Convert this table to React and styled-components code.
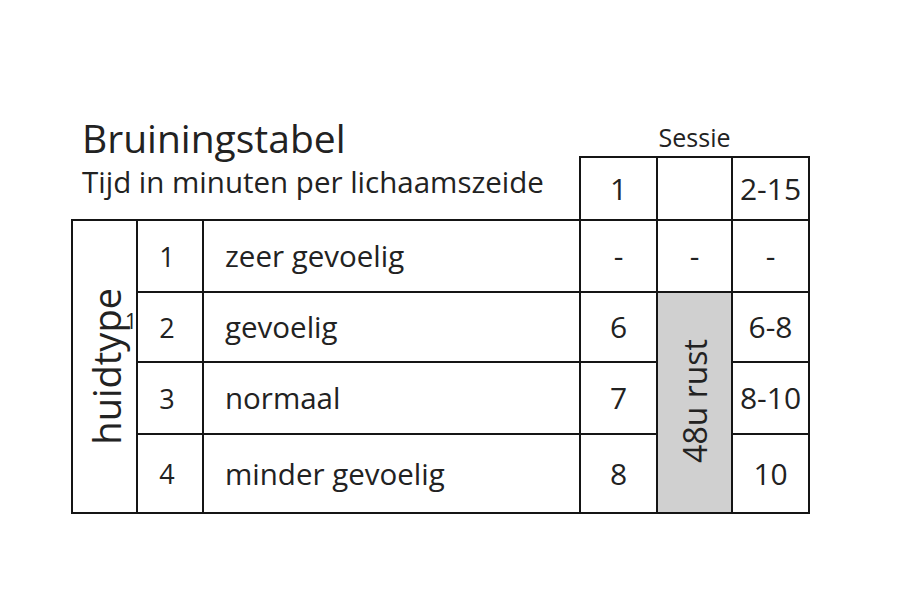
import React from "react";
import styled, { createGlobalStyle } from "styled-components";

const GlobalStyle = createGlobalStyle`
  html, body {
    margin: 0;
    padding: 0;
    background: #ffffff;
  }
  body {
    font-family: "Open Sans", "Noto Sans", sans-serif;
    color: #222222;
  }
`;

const Page = styled.div`
  width: 900px;
  height: 600px;
  padding: 110px 0 0 71px;
  box-sizing: border-box;
`;

const Table = styled.table`
  border-collapse: collapse;
  table-layout: fixed;
  width: 738px;

  td {
    padding: 0;
    border: 2px solid #151515;
  }
`;

const TopRow = styled.tr`
  height: 47px;

  td {
    border: none;
    vertical-align: bottom;
  }
`;

const Title = styled.td`
  font-size: 39px;
  line-height: 39px;
  padding-left: 10px !important;
  white-space: nowrap;
`;

const SessionLabel = styled.td`
  font-size: 25px;
  line-height: 25px;
  text-align: center;
  padding-bottom: 6px !important;
`;

const HeadRow = styled.tr`
  height: 63px;
`;

const Subtitle = styled.td`
  border: none !important;
  font-size: 29.5px;
  line-height: 29.5px;
  vertical-align: top;
  padding: 10px 0 0 10px !important;
  white-space: nowrap;
`;

const Row = styled.tr`
  height: ${(p) => p.$h}px;
`;

const Cell = styled.td`
  font-size: ${(p) => p.$size || 30}px;
  line-height: 1;
  text-align: ${(p) => (p.$left ? "left" : "center")};
  padding-left: ${(p) => (p.$left ? "21px" : "0")} !important;
  padding-right: ${(p) => (p.$narrow ? "6px" : "0")} !important;
  vertical-align: middle;
  white-space: nowrap;
  background: ${(p) => (p.$shade ? "#d0d0d0" : "transparent")};
`;

const SideCell = styled.td`
  vertical-align: middle;
  text-align: center;
`;

const SideWrap = styled.div`
  position: relative;
  display: flex;
  justify-content: center;
  align-items: center;
  padding-left: 3px;
`;

const Vertical = styled.span`
  display: inline-block;
  writing-mode: vertical-rl;
  transform: rotate(180deg);
  font-size: ${(p) => p.$size}px;
  line-height: 1;
  white-space: nowrap;
`;

const Footnote = styled.span`
  position: absolute;
  left: 52px;
  top: 23px;
  font-size: 21px;
  line-height: 1;
`;

const rows = [
  { h: 72, n: "1", label: "zeer gevoelig", first: "-", last: "-" },
  { h: 70, n: "2", label: "gevoelig", first: "6", last: "6-8" },
  { h: 72, n: "3", label: "normaal", first: "7", last: "8-10" },
  { h: 79, n: "4", label: "minder gevoelig", first: "8", last: "10" },
];

export default function App() {
  return (
    <>
      <GlobalStyle />
      <Page>
        <Table>
          <colgroup>
            <col style={{ width: 65 }} />
            <col style={{ width: 66 }} />
            <col style={{ width: 377 }} />
            <col style={{ width: 77 }} />
            <col style={{ width: 75 }} />
            <col style={{ width: 77 }} />
          </colgroup>
          <tbody>
            <TopRow>
              <Title colSpan={3}>Bruiningstabel</Title>
              <SessionLabel colSpan={3}>Sessie</SessionLabel>
            </TopRow>
            <HeadRow>
              <Subtitle colSpan={3}>Tijd in minuten per lichaamszeide</Subtitle>
              <Cell>1</Cell>
              <Cell></Cell>
              <Cell>2-15</Cell>
            </HeadRow>
            {rows.map((r, i) => (
              <Row key={r.n} $h={r.h}>
                {i === 0 && (
                  <SideCell rowSpan={4}>
                    <SideWrap>
                      <Vertical $size={38}>huidtype</Vertical>
                      <Footnote>1</Footnote>
                    </SideWrap>
                  </SideCell>
                )}
                <Cell $size={27} $narrow>{r.n}</Cell>
                <Cell $left $size={29.5}>{r.label}</Cell>
                <Cell>{r.first}</Cell>
                {i === 0 && <Cell>-</Cell>}
                {i === 1 && (
                  <Cell rowSpan={3} $shade>
                    <Vertical $size={32}>48u rust</Vertical>
                  </Cell>
                )}
                <Cell>{r.last}</Cell>
              </Row>
            ))}
          </tbody>
        </Table>
      </Page>
    </>
  );
}
